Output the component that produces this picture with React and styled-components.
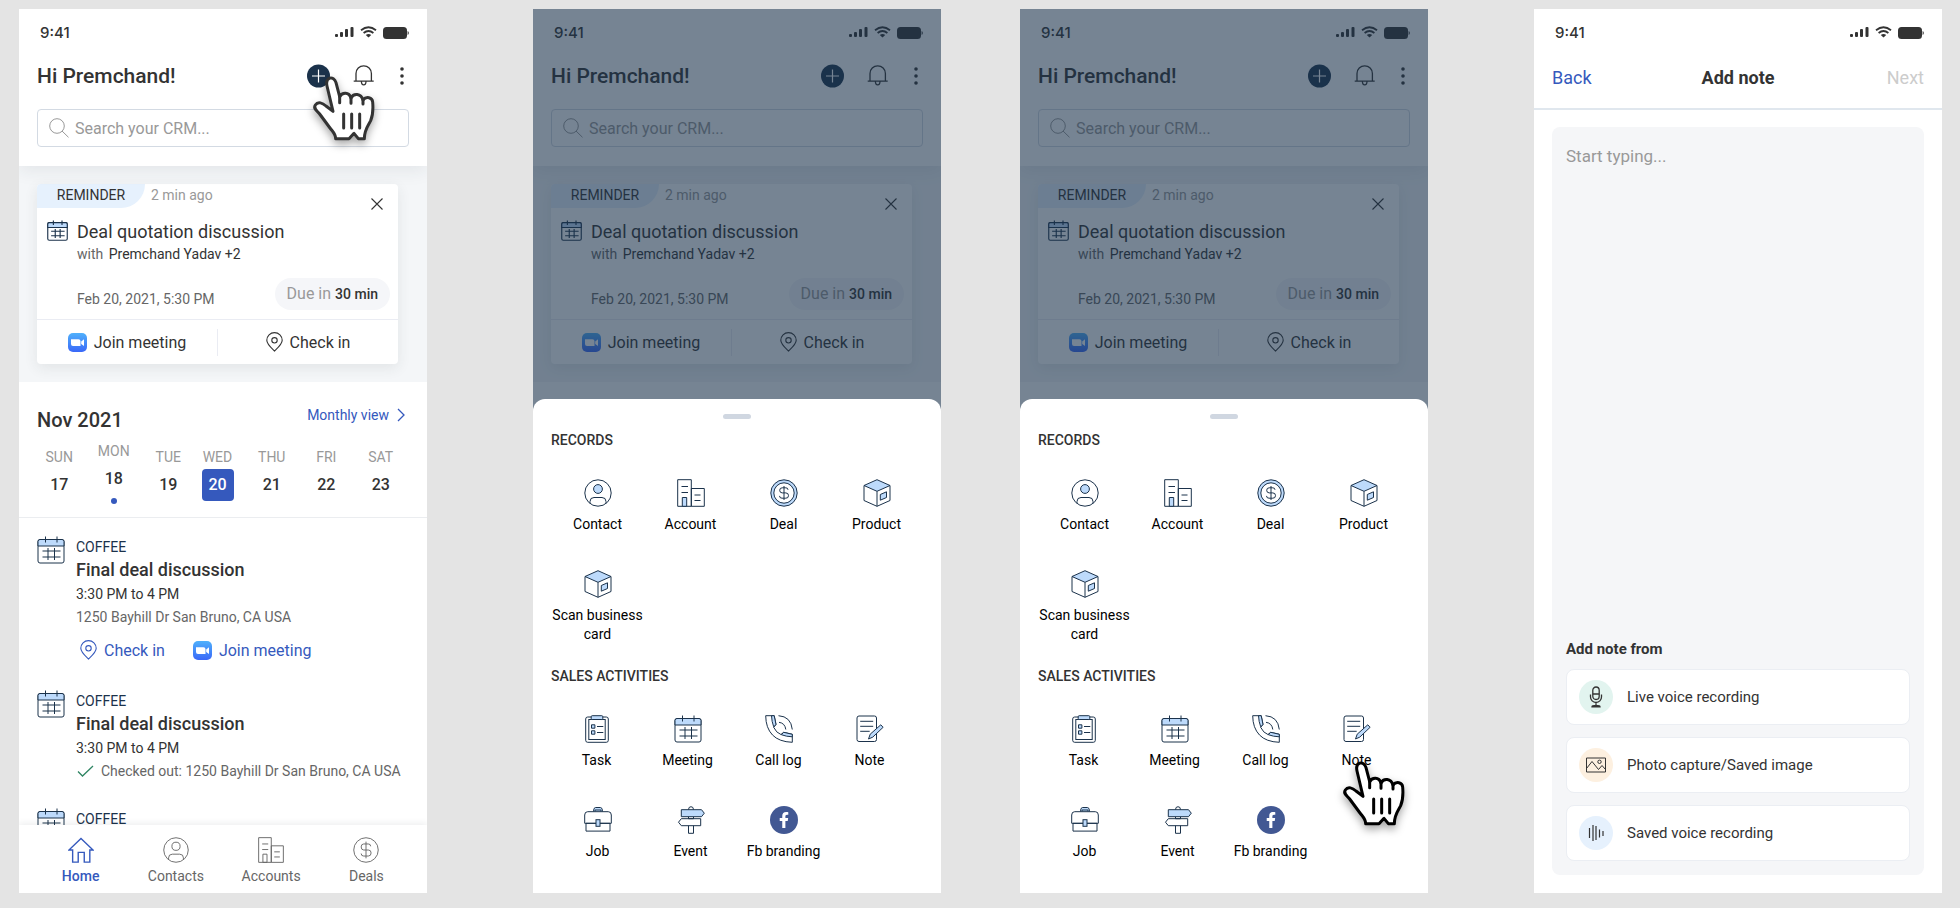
import React from 'react';
import styled, { createGlobalStyle } from 'styled-components';
import { FaFacebookF } from 'react-icons/fa';

const GlobalStyle = createGlobalStyle`
  * {
    box-sizing: border-box;
  }
  body {
    margin: 0;
    background: #e4e4e4;
    color: #333;
    font-family: Roboto, 'Liberation Sans', sans-serif;
    font-size: 14px;
  }
  h1, h2, h3, p, ul {
    margin: 0;
    padding: 0;
  }
  ul {
    list-style: none;
  }
  button, input, textarea {
    margin: 0;
    padding: 0;
    border: 0;
    background: none;
    color: inherit;
    font: inherit;
  }
  button {
    cursor: pointer;
  }
  a {
    color: inherit;
    text-decoration: none;
  }
  svg {
    display: block;
    flex: none;
  }
`;

/* Page */

const Board = styled.main`
  display: flex;
  height: 100vh;
  min-height: 760px;
  padding: 9px 18px 15px 19px;
`;

const Screen = styled.section`
  position: relative;
  display: flex;
  flex: 1 1 0;
  flex-direction: column;
  min-width: 340px;
  margin-left: ${({ $lead }) => $lead || 0}px;
  overflow: hidden;
  background: #fff;
`;

/* Status bar */

const StatusRow = styled.div`
  display: flex;
  align-items: center;
  gap: 6px;
  height: 48px;
  padding: 0 18px 2px 21px;
`;

const Clock = styled.span`
  margin-right: auto;
  font-family: Inter, Roboto, sans-serif;
  font-size: 15px;
  font-weight: 500;
`;

/* Home header */

const Header = styled.header`
  position: relative;
  z-index: 1;
  padding-bottom: 19px;
  background: #fff;
  box-shadow: 0 5px 16px rgba(40, 50, 60, 0.08);
`;

const TitleRow = styled.div`
  display: flex;
  align-items: center;
  gap: 23px;
  height: 38px;
  padding: 0 23px 0 18px;
`;

const Greeting = styled.h1`
  margin-right: auto;
  font-size: 21px;
  font-weight: 500;
  line-height: 24px;
`;

const IconButton = styled.button`
  position: relative;
  display: flex;
  color: #333;
`;

const SearchBox = styled.label`
  display: flex;
  align-items: center;
  gap: 6px;
  height: 38px;
  margin: 14px 18px 0;
  padding: 0 11px;
  border: 1px solid #d3dae3;
  border-radius: 4px;
  color: #999;
`;

const SearchInput = styled.input`
  flex: 1;
  min-width: 0;
  outline: none;
  color: #333;
  font-size: 16px;
  &::placeholder {
    color: #999;
    opacity: 1;
  }
`;

/* Reminder */

const ReminderArea = styled.div`
  padding: 18px 29px 18px 18px;
  background: #f4f6f8;
`;

const Card = styled.article`
  position: relative;
  border-radius: 4px;
  background: #fff;
  box-shadow: 0 4px 14px rgba(40, 50, 60, 0.09);
`;

const CardTop = styled.div`
  display: flex;
  gap: 6px;
  height: 24px;
  color: #999;
  line-height: 22px;
`;

const Tag = styled.span`
  width: 108px;
  border-radius: 4px 0 24px 0;
  background: #e6f1fd;
  color: #333;
  text-align: center;
`;

const CloseButton = styled.button`
  position: absolute;
  top: 10px;
  right: 11px;
  padding: 4px;
  color: #333;
`;

const CardBody = styled.div`
  display: flex;
  gap: 9px;
  padding: 12px 8px 9px 10px;
`;

const CardText = styled.div`
  flex: 1;
  min-width: 0;
`;

const CardTitle = styled.h2`
  font-size: 18px;
  font-weight: 400;
  line-height: 24px;
`;

const CardPeople = styled.p`
  line-height: 20px;
  color: #666;
  b {
    margin-left: 2px;
    color: #333;
    font-weight: 400;
  }
`;

const CardDue = styled.div`
  display: flex;
  align-items: flex-end;
  justify-content: space-between;
  margin-top: 14px;
  color: #666;
  line-height: 22px;
`;

const Pill = styled.span`
  padding: 0 12px;
  border-radius: 16px;
  background: #f5f6f9;
  color: #999;
  font-size: 16px;
  line-height: 31px;
  b {
    color: #333;
    font-size: 14px;
    font-weight: 500;
  }
`;

const CardActions = styled.div`
  display: flex;
  align-items: center;
  height: 45px;
  border-top: 1px solid #eaecf3;
`;

const CardAction = styled.button`
  display: flex;
  flex: 1;
  align-items: center;
  justify-content: center;
  gap: 7px;
  height: 27px;
  font-size: 16px;
  & + & {
    border-left: 1px solid #eaecf3;
  }
`;

/* Calendar strip */

const Calendar = styled.section`
  padding: 24px 0 10px;
  border-bottom: 1px solid #ebedf0;
`;

const CalendarHead = styled.div`
  display: flex;
  align-items: flex-start;
  justify-content: space-between;
  padding: 0 22px 0 18px;
`;

const Month = styled.h2`
  font-size: 20px;
  font-weight: 500;
  line-height: 28px;
`;

const MonthLink = styled.a`
  display: flex;
  align-items: center;
  gap: 8px;
  color: #3559bd;
  line-height: 18px;
`;

const Days = styled.div`
  display: flex;
  align-items: center;
  gap: 12px;
  margin-top: 7px;
  padding: 0 25px 0 19px;
`;

const Day = styled.button`
  display: flex;
  flex: ${({ $selected }) => ($selected ? '0 0 32px' : '1 1 0')};
  flex-direction: column;
  align-items: center;
  gap: 2px;
  margin-right: ${({ $selected }) => ($selected ? 5 : 0)}px;
  color: #999;
  line-height: 20px;
`;

const DayNumber = styled.span`
  width: 32px;
  border-radius: 4px;
  background: ${({ $selected }) => ($selected ? '#3559bd' : 'transparent')};
  color: ${({ $selected }) => ($selected ? '#fff' : '#333')};
  font-size: 16px;
  font-weight: 500;
  line-height: 32px;
  text-align: center;
`;

const Dot = styled.i`
  width: 6px;
  height: 6px;
  margin: 1px 0 3px;
  border-radius: 50%;
  background: #3559bd;
`;

/* Events */

const EventList = styled.ul`
  display: flex;
  flex: 1 1 0;
  flex-direction: column;
  gap: 26px;
  min-height: 0;
  padding: 18px 18px 0;
  overflow: hidden;
`;

const EventItem = styled.li`
  display: flex;
  gap: 11px;
`;

const EventKind = styled.p`
  color: #1b324b;
  line-height: 22px;
`;

const EventTitle = styled.h3`
  font-size: 18px;
  font-weight: 500;
  line-height: 24px;
`;

const EventTime = styled.p`
  line-height: 24px;
`;

const EventPlace = styled.p`
  display: flex;
  align-items: center;
  gap: 6px;
  color: #666;
  line-height: 22px;
  white-space: nowrap;
`;

const EventActions = styled.div`
  display: flex;
  gap: 28px;
  height: 24px;
  margin: 10px 0 2px;
  padding-left: 4px;
`;

const EventAction = styled.button`
  display: flex;
  align-items: center;
  gap: 7px;
  color: #3559bd;
  font-size: 16px;
`;

/* Bottom navigation */

const NavBar = styled.nav`
  position: relative;
  display: flex;
  height: 68px;
  padding: 12px 13px 0 14px;
  background: #fff;
  box-shadow: 0 -2px 6px rgba(40, 50, 60, 0.08);
`;

const NavLink = styled.a`
  display: flex;
  flex: 1;
  flex-direction: column;
  align-items: center;
  gap: 3px;
  color: ${({ $active }) => ($active ? '#3559bd' : '#666')};
  font-weight: ${({ $active }) => ($active ? 500 : 400)};
  line-height: 20px;
`;

/* Bottom sheet */

const Overlay = styled.div`
  position: absolute;
  inset: 0;
  z-index: 2;
  background: rgba(27, 50, 75, 0.6);
`;

const Sheet = styled.div`
  position: absolute;
  right: 0;
  bottom: 0;
  left: 0;
  z-index: 3;
  padding: 15px 18px 32px;
  border-radius: 12px 12px 0 0;
  background: #fff;
`;

const Handle = styled.div`
  width: 28px;
  height: 5px;
  margin: 0 auto 11px;
  border-radius: 3px;
  background: #d0d7e1;
`;

const SheetTitle = styled.h2`
  font-size: 14px;
  font-weight: 500;
  line-height: 20px;
`;

const TileRow = styled.div`
  display: grid;
  grid-template-columns: repeat(4, 1fr);
  margin-top: ${({ $first }) => ($first ? 29 : 36)}px;
  margin-bottom: ${({ $last }) => ($last ? 22 : 0)}px;
  padding-right: ${({ $tight }) => ($tight ? 8 : 0)}px;
`;

const Tile = styled.button`
  position: relative;
  display: flex;
  flex-direction: column;
  align-items: center;
  gap: 8px;
  color: #000;
  line-height: 19px;
`;

const FbBadge = styled.span`
  display: flex;
  align-items: center;
  justify-content: center;
  width: 28px;
  height: 28px;
  border-radius: 50%;
  background: #425893;
  color: #fff;
`;

const Pointer = styled.svg`
  position: absolute;
  top: ${({ $top }) => $top}px;
  left: ${({ $left }) => $left};
  z-index: 4;
  filter: drop-shadow(0 4px 4px rgba(0, 0, 0, 0.35));
  pointer-events: none;
`;

/* Add note */

const NoteHead = styled.header`
  display: grid;
  grid-template-columns: 1fr auto 1fr;
  align-items: center;
  padding: 9px 18px 18px;
  border-bottom: 2px solid #e0e7ee;
  font-size: 18px;
  line-height: 24px;
`;

const BackButton = styled.button`
  justify-self: start;
  color: #3559bd;
`;

const NoteTitle = styled.h1`
  font-size: 18px;
  font-weight: 700;
`;

const NextButton = styled.button`
  justify-self: end;
  color: #ccc;
`;

const NotePanel = styled.div`
  display: flex;
  flex: 1;
  flex-direction: column;
  margin: 17px 18px 18px;
  padding: 14px;
  border-radius: 8px;
  background: #f5f6f8;
`;

const NoteInput = styled.textarea`
  flex: 1;
  min-height: 120px;
  padding-top: 3px;
  outline: none;
  font-size: 17px;
  line-height: 24px;
  resize: none;
  &::placeholder {
    color: #999;
    opacity: 1;
  }
`;

const SourceTitle = styled.h2`
  margin-bottom: 10px;
  font-size: 15px;
  font-weight: 700;
  line-height: 20px;
`;

const Sources = styled.div`
  display: flex;
  flex-direction: column;
  gap: 12px;
`;

const Source = styled.button`
  display: flex;
  align-items: center;
  gap: 14px;
  height: 56px;
  padding: 0 12px;
  border: 1px solid #ebeef3;
  border-radius: 8px;
  background: #fff;
  font-size: 15px;
`;

const SourceIcon = styled.span`
  display: flex;
  align-items: center;
  justify-content: center;
  width: 34px;
  height: 34px;
  border-radius: 50%;
  background: ${({ $tone }) => $tone};
`;

/* Icons */

const NAVY = '#1b324b';
const LIGHT = '#bddafb';

const Icon = ({ size = 28, box = 28, stroke = NAVY, width = 1, children }) => (
  <svg
    width={size}
    height={size}
    viewBox={`0 0 ${box} ${box}`}
    fill="none"
    stroke={stroke}
    strokeWidth={width}
    aria-hidden="true"
  >
    {children}
  </svg>
);

const CalendarIcon = ({ size, width }) => (
  <Icon size={size} width={width}>
    <rect x="1" y="3.5" width="26" height="23.5" rx="2" fill="#fff" />
    <path d="M1 10V5.5q0-2 2-2h22q2 0 2 2V10z" fill={LIGHT} />
    <path d="M8.500 .5v6M20 .5v6M11 12v12M17.500 12v12M5.500 15h18M5.500 21h18" />
  </Icon>
);

const ContactIcon = ({ size, stroke, fill = LIGHT }) => (
  <Icon size={size} stroke={stroke}>
    <circle cx="14" cy="14" r="13.2" />
    <circle cx="14" cy="10" r="4.4" fill={fill} />
    <path d="M6 24.300v-1.800q0-4 4-4h8q4 0 4 4v1.800" />
  </Icon>
);

const AccountIcon = ({ size, stroke, fill = LIGHT }) => (
  <Icon size={size} stroke={stroke}>
    <path d="M.7.7h13.600v26.600H.7zM14.300 9.500h13v17.800h-13zM4.500 7.500h6.500M4.500 13.500h6.500M17.500 16h6M17.500 21.500h6" />
    <path d="M5.300 18.500h4.400v8.800H5.300z" fill={fill} />
  </Icon>
);

const DealIcon = () => (
  <Icon>
    <circle cx="14" cy="14" r="13.200" fill={LIGHT} />
    <circle cx="14" cy="14" r="10.200" fill="#fff" />
    <path d="M14 7v14M18 10.800q0-2-2.200-2h-3.600q-2.500 0-2.500 2.500t2.500 2.600h3.600q2.700 0 2.700 2.700t-2.700 2.600h-3.800q-2.500 0-2.500-2.300" />
  </Icon>
);

const DollarIcon = ({ size, stroke }) => (
  <Icon size={size} stroke={stroke}>
    <circle cx="14" cy="14" r="13.200" />
    <path d="M14 5v18M19 10q0-2.500-2.500-2.500h-5q-2.700 0-2.700 3.200t2.700 3.300h5q3 0 3 3.200t-3 3.300h-5q-2.700 0-2.700-2.700" />
  </Icon>
);

const ProductIcon = () => (
  <Icon>
    <path d="M1 6.500v15L14 27.300l13-5.800v-15M14 12.300v15" />
    <path d="M14 .7 27 6.500l-13 5.800L1 6.500z" fill={LIGHT} />
    <path d="m17.300 15.500 6.200-2.700v5.700l-6.200 2.700z" fill={LIGHT} />
  </Icon>
);

const TaskIcon = () => (
  <Icon>
    <rect x="2.700" y="2" width="22.600" height="25.300" rx="2" />
    <rect x="5.800" y="4.500" width="16.400" height="20" />
    <rect x="8.200" y=".7" width="11.600" height="3.800" rx="1" fill={LIGHT} />
    <path d="M8.500 9.800h3.400v3.400H8.500zM8.500 15.800h3.400v3.400H8.500z" fill={LIGHT} />
    <path d="M14 11.500h6.300M14 17.500h6.300" />
  </Icon>
);

const CallIcon = () => (
  <Icon>
    <path d="M.7.7h8.500L11 9.500l-2.300 2.800q2.500 5.500 7.200 7.200l2.800-2.200 8.600 2v8Q14 26.800 7.500 20 .8 13 .7.7z" />
    <path d="M6.500.7h2.700L11 9.500l-2.300 2.300Q6.700 6.500 6.500.7zM16.300 19.700l2.400-2.400 8.600 2v2.500q-6-.2-11-2.100z" fill={LIGHT} />
    <path d="M13.500.7q12.500.8 13.800 13.800M14 7.300q6 .8 6.800 7.200" />
  </Icon>
);

const NoteIcon = () => (
  <Icon>
    <rect x="1" y="1" width="19.500" height="25.500" rx="2" />
    <path d="M4.200 6.300h13M4.200 11.300h13M4.200 16.300h9.500" />
    <path d="m12.500 24 1.700-4.800L24.800 9.800l2.300 2.500-10.300 9.800z" fill={LIGHT} />
  </Icon>
);

const JobIcon = () => (
  <Icon>
    <path d="M9.500 5.500q0-4 2-4h5q2 0 2 4M11 5.500V4h6v1.500" fill={LIGHT} />
    <path d="M2 17.300h24v7.800H2zM.7 17.300V9q0-3.300 3-3.300h20.600q3 0 3 3.300v8.300z" fill="#fff" />
    <rect x="12" y="13.700" width="4" height="6.600" fill={LIGHT} />
  </Icon>
);

const SignpostIcon = () => (
  <Icon>
    <path d="M11.500 3.700q0-3 2.500-3t2.500 3M11.500 10.700v2h5v-2M11.500 19.700v7.600h5v-7.600" />
    <path d="M4.300 3.700h20.200l2.800 3.500-2.800 3.500H4.300z" fill={LIGHT} />
    <path d="M23.700 12.700H4.300L1.500 16.200l2.800 3.500h19.400z" />
  </Icon>
);

const PinIcon = ({ stroke = '#333' }) => (
  <svg width="17" height="20" viewBox="0 0 17 20" fill="none" stroke={stroke} strokeWidth="1.100" aria-hidden="true">
    <path d="M8.500 19C7 17.400.8 12.500.8 8.300a7.700 7.700 0 0 1 15.400 0C16.200 12.500 10 17.400 8.500 19z" />
    <circle cx="8.500" cy="8.300" r="2.700" />
  </svg>
);

const ZoomIcon = () => (
  <svg width="19" height="19" viewBox="0 0 19 19" aria-hidden="true">
    <defs>
      <linearGradient id="zoomBlue" x1="0" y1="0" x2="0" y2="1">
        <stop offset="0" stopColor="#4fb0fb" />
        <stop offset="1" stopColor="#3a68f8" />
      </linearGradient>
    </defs>
    <rect width="19" height="19" rx="5" fill="url(#zoomBlue)" />
    <path d="M3 6.200h7.500q2 0 2 2v4.900H5q-2 0-2-2zM13.200 8.500 16 6.200v6.900l-2.800-2.200z" fill="#fff" />
  </svg>
);

const HomeIcon = () => (
  <Icon size={26} stroke="#3559bd" width={1.5}>
    <path d="M14 1.500 27 14h-3.500v13H17.500V16.500h-6.500V27H5V14H1z" />
  </Icon>
);

const SearchIcon = () => (
  <Icon size={20} box={20} stroke="#999">
    <circle cx="8" cy="8" r="7.300" />
    <path d="m13 13 6.500 6.300" />
  </Icon>
);

const PlusIcon = () => (
  <Icon size={24} box={24} stroke="#fff" width={1.2}>
    <circle cx="12.500" cy="12" r="11.500" fill={NAVY} stroke="none" />
    <path d="M12.500 5.500v13M6 12h13" />
  </Icon>
);

const BellIcon = () => (
  <Icon size={24} box={24} stroke="#333" width={1.3}>
    <path d="M.7 17.200h20M3 17.200V9.500a7.700 7.700 0 0 1 15.400 0v7.700M8.400 17.200a2.300 3.600 0 0 0 4.600 0" />
  </Icon>
);

const MoreIcon = () => (
  <svg width="4" height="24" viewBox="0 0 4 24" fill="#333" aria-hidden="true">
    <circle cx="2" cy="5" r="1.800" />
    <circle cx="2" cy="12" r="1.800" />
    <circle cx="2" cy="19" r="1.800" />
  </svg>
);

const HandPointer = ({ top, left, stroke }) => (
  <Pointer $top={top} $left={left} width="62" height="65" viewBox="0 0 186 195" fill="none" stroke={stroke} strokeWidth="9" strokeLinejoin="round" strokeLinecap="round" aria-hidden="true">
    <path
      d="M60 106 42 30C36 2 62-2 69 20l11 42C88 48 108 48 114 66c8-16 30-14 36 6 10-12 28-8 29 6 2 24 0 42-6 56-8 16-19 26-19 54h-18l-13-16-15 16H68c0-14-8-20-17-32L20 114C12 104 0 98 7 87c8-12 22-6 32 3z"
      fill="#fff"
    />
    <path d="M80 60v20M114 64v18M150 70v14M92 114v42M116 114v42M140 114v42" />
  </Pointer>
);

/* Shared pieces */

const StatusBar = () => (
  <StatusRow>
    <Clock>9:41</Clock>
    <svg width="19" height="12" viewBox="0 0 19 12" fill="#333" aria-hidden="true">
      <rect x="0" y="8" width="3" height="3" rx="1" />
      <rect x="5" y="6" width="3" height="5" rx="1" />
      <rect x="10" y="3" width="3" height="8" rx="1" />
      <rect x="15.500" y="1" width="3" height="10" rx="1" />
    </svg>
    <svg width="17" height="12" viewBox="0 0 17 12" fill="none" stroke="#333" strokeWidth="1.800" aria-hidden="true">
      <path d="M1 4.200q7.500-6 15 0M3.600 7q4.900-4 9.800 0" />
      <path d="M5.800 9q2.700-2 5.400 0L8.500 11.600z" fill="#333" stroke="none" />
    </svg>
    <svg width="26" height="14" viewBox="0 0 26 14" fill="#333" aria-hidden="true">
      <rect y="2" width="24" height="12" rx="3.500" />
      <path d="M24.600 6q1.200.6 1.200 2t-1.200 2z" />
    </svg>
  </StatusRow>
);

const HomeHeader = ({ pointer }) => (
  <Header>
    <StatusBar />
    <TitleRow>
      <Greeting>Hi Premchand!</Greeting>
      <IconButton type="button" aria-label="Add">
        <PlusIcon />
        {pointer && <HandPointer top={12} left="7px" stroke="#333" />}
      </IconButton>
      <IconButton type="button" aria-label="Notifications">
        <BellIcon />
      </IconButton>
      <IconButton type="button" aria-label="More">
        <MoreIcon />
      </IconButton>
    </TitleRow>
    <SearchBox>
      <SearchIcon />
      <SearchInput type="search" placeholder="Search your CRM..." aria-label="Search your CRM" />
    </SearchBox>
  </Header>
);

const Reminder = () => (
  <ReminderArea>
    <Card>
      <CardTop>
        <Tag>REMINDER</Tag>
        <span>2 min ago</span>
      </CardTop>
      <CloseButton type="button" aria-label="Close">
        <Icon size={12} box={12} stroke="#333" width={1.1}>
          <path d="m.5.5 11 11M11.500.5l-11 11" />
        </Icon>
      </CloseButton>
      <CardBody>
        <CalendarIcon size={21} width={1.5} />
        <CardText>
          <CardTitle>Deal quotation discussion</CardTitle>
          <CardPeople>
            with <b>Premchand Yadav +2</b>
          </CardPeople>
          <CardDue>
            <span>Feb 20, 2021, 5:30 PM</span>
            <Pill>
              Due in <b>30 min</b>
            </Pill>
          </CardDue>
        </CardText>
      </CardBody>
      <CardActions>
        <CardAction type="button">
          <ZoomIcon />
          Join meeting
        </CardAction>
        <CardAction type="button">
          <PinIcon />
          Check in
        </CardAction>
      </CardActions>
    </Card>
  </ReminderArea>
);

const days = [
  { name: 'SUN', date: 17 },
  { name: 'MON', date: 18, dot: true },
  { name: 'TUE', date: 19 },
  { name: 'WED', date: 20, selected: true },
  { name: 'THU', date: 21 },
  { name: 'FRI', date: 22 },
  { name: 'SAT', date: 23 },
];

const events = [
  { id: 1, place: '1250 Bayhill Dr San Bruno, CA USA', actions: true },
  { id: 2, place: 'Checked out: 1250 Bayhill Dr San Bruno, CA USA', checked: true },
  { id: 3 },
];

const records = [
  { label: 'Contact', icon: <ContactIcon /> },
  { label: 'Account', icon: <AccountIcon /> },
  { label: 'Deal', icon: <DealIcon /> },
  { label: 'Product', icon: <ProductIcon /> },
];

const activities = [
  { label: 'Task', icon: <TaskIcon /> },
  { label: 'Meeting', icon: <CalendarIcon /> },
  { label: 'Call log', icon: <CallIcon /> },
  { label: 'Note', icon: <NoteIcon /> },
];

const moreActivities = [
  { label: 'Job', icon: <JobIcon /> },
  { label: 'Event', icon: <SignpostIcon /> },
  { label: 'Fb branding', icon: <FbBadge><FaFacebookF size={16} /></FbBadge> },
];

const HomeScreen = () => (
  <Screen>
    <HomeHeader pointer />
    <Reminder />
    <Calendar>
      <CalendarHead>
        <Month>Nov 2021</Month>
        <MonthLink href="#month">
          Monthly view
          <svg width="8" height="14" viewBox="0 0 8 14" fill="none" stroke="#3559bd" strokeWidth="1.300" aria-hidden="true">
            <path d="m1 1 6 6-6 6" />
          </svg>
        </MonthLink>
      </CalendarHead>
      <Days>
        {days.map((day) => (
          <Day type="button" key={day.name} $selected={day.selected}>
            {day.name}
            <DayNumber $selected={day.selected}>{day.date}</DayNumber>
            {day.dot && <Dot />}
          </Day>
        ))}
      </Days>
    </Calendar>
    <EventList>
      {events.map((event) => (
        <EventItem key={event.id}>
          <CalendarIcon />
          <div>
            <EventKind>COFFEE</EventKind>
            {event.place && (
              <>
                <EventTitle>Final deal discussion</EventTitle>
                <EventTime>3:30 PM to 4 PM</EventTime>
                <EventPlace>
                  {event.checked && (
                    <svg width="19" height="14" viewBox="0 0 19 14" fill="none" stroke="#2f8563" strokeWidth="1.300" aria-hidden="true">
                      <path d="m2 7.500 4.500 4.500L17 2" />
                    </svg>
                  )}
                  {event.place}
                </EventPlace>
              </>
            )}
            {event.actions && (
              <EventActions>
                <EventAction type="button">
                  <PinIcon stroke="#3559bd" />
                  Check in
                </EventAction>
                <EventAction type="button">
                  <ZoomIcon />
                  Join meeting
                </EventAction>
              </EventActions>
            )}
          </div>
        </EventItem>
      ))}
    </EventList>
    <NavBar>
      <NavLink href="#home" $active>
        <HomeIcon />
        Home
      </NavLink>
      <NavLink href="#contacts">
        <ContactIcon size={26} stroke="#666" fill="none" />
        Contacts
      </NavLink>
      <NavLink href="#accounts">
        <AccountIcon size={26} stroke="#666" fill="none" />
        Accounts
      </NavLink>
      <NavLink href="#deals">
        <DollarIcon size={26} stroke="#666" />
        Deals
      </NavLink>
    </NavBar>
  </Screen>
);

const CreateScreen = ({ lead, pointer }) => (
  <Screen $lead={lead}>
    <HomeHeader />
    <Reminder />
    <Overlay />
    <Sheet>
      <Handle />
      <SheetTitle>RECORDS</SheetTitle>
      <TileRow $first>
        {records.map((item) => (
          <Tile type="button" key={item.label}>
            {item.icon}
            {item.label}
          </Tile>
        ))}
      </TileRow>
      <TileRow $last>
        <Tile type="button">
          <ProductIcon />
          Scan business card
        </Tile>
      </TileRow>
      <SheetTitle>SALES ACTIVITIES</SheetTitle>
      <TileRow $first $tight>
        {activities.map((item) => (
          <Tile type="button" key={item.label}>
            {item.icon}
            {item.label}
            {pointer && item.label === 'Note' && (
              <HandPointer top={46} left="calc(50% - 14px)" stroke="#000" />
            )}
          </Tile>
        ))}
      </TileRow>
      <TileRow>
        {moreActivities.map((item) => (
          <Tile type="button" key={item.label}>
            {item.icon}
            {item.label}
          </Tile>
        ))}
      </TileRow>
    </Sheet>
  </Screen>
);

const NoteScreen = ({ lead }) => (
  <Screen $lead={lead}>
    <StatusBar />
    <NoteHead>
      <BackButton type="button">Back</BackButton>
      <NoteTitle>Add note</NoteTitle>
      <NextButton type="button">Next</NextButton>
    </NoteHead>
    <NotePanel>
      <NoteInput placeholder="Start typing..." aria-label="Note" />
      <SourceTitle>Add note from</SourceTitle>
      <Sources>
        <Source type="button">
          <SourceIcon $tone="#e2f4ef">
            <Icon size={22} box={22} stroke="#333" width={1.3}>
              <rect x="7.800" y="1" width="6.400" height="12.500" rx="3.200" />
              <path d="M7.800 8h6.400M5.500 8.500v2.500a5.500 5.500 0 0 0 11 0V8.500M11 16.500v3.500M7 20.800q0-1.300 4-1.300t4 1.300z" />
            </Icon>
          </SourceIcon>
          Live voice recording
        </Source>
        <Source type="button">
          <SourceIcon $tone="#fdf0e0">
            <Icon size={22} box={22} stroke="#333">
              <path d="M1.500 4h19v14h-19zM1.500 14.500 7 7.500l6.500 8 3.500-4 3.500 4" />
              <circle cx="14.500" cy="7.800" r="1.700" />
            </Icon>
          </SourceIcon>
          Photo capture/Saved image
        </Source>
        <Source type="button">
          <SourceIcon $tone="#e6f1fd">
            <Icon size={22} box={22} stroke="#333" width={1.2}>
              <path d="M4.500 6v10M8 3v16M11 4v14M14.500 7.500v8M18 9v5" />
            </Icon>
          </SourceIcon>
          Saved voice recording
        </Source>
      </Sources>
    </NotePanel>
  </Screen>
);

const App = () => {
  return (
    <>
      <GlobalStyle />
      <Board>
        <HomeScreen />
        <CreateScreen lead={106} />
        <CreateScreen lead={79} pointer />
        <NoteScreen lead={106} />
      </Board>
    </>
  );
};

export default App;
